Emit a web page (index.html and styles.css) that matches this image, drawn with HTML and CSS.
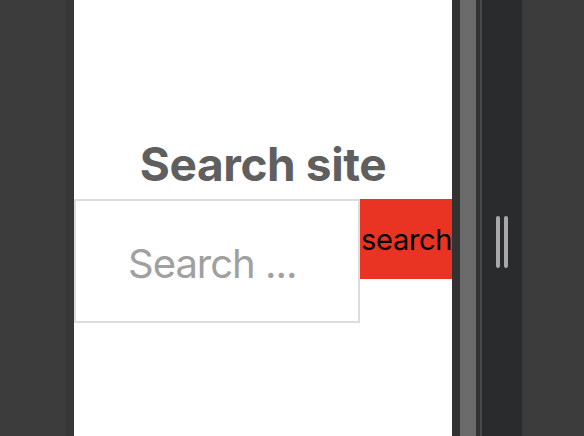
FILE: index.html
```html
<!DOCTYPE html>
<html>
<head>
<meta charset="utf-8">
<link rel="stylesheet" href="styles.css">
</head>
<body>
<div class="frame">
  <div class="gutter-left"></div>
  <div class="edge edge-left"></div>
  <main class="panel">
    <h1 class="title">Search site</h1>
    <form class="search">
      <input class="search-input" type="text" placeholder="Search ...">
      <button class="search-btn" type="button">search</button>
    </form>
  </main>
  <div class="edge"></div>
  <div class="scrollbar"></div>
  <div class="edge-thin"></div>
  <div class="line"></div>
  <div class="splitter">
    <span class="grip"></span>
    <span class="grip"></span>
  </div>
  <div class="gutter-right"></div>
</div>
</body>
</html>
```

FILE: styles.css
```css
html, body {
  margin: 0;
  padding: 0;
  height: 100%;
  overflow: hidden;
  background: #3c3c3c;
}

.frame {
  display: flex;
  height: 436px;
  width: 584px;
}

.gutter-left {
  width: 66px;
  background: #3c3c3c;
}

.edge {
  width: 8px;
  background: #323232;
}

.edge-left {
  background: #373737;
}

.panel {
  width: 378px;
  background: #ffffff;
  overflow: hidden;
  padding-top: 136px;
  box-sizing: border-box;
}

.title {
  margin: 0 0 7px;
  font-family: Inter, "Noto Sans", sans-serif;
  font-weight: 700;
  font-size: 46px;
  line-height: 56px;
  letter-spacing: -0.4px;
  color: #5f5f5f;
  text-align: center;
}

.search {
  display: flex;
  align-items: flex-start;
  margin: 0;
}

.search-input {
  box-sizing: border-box;
  width: 286px;
  height: 124px;
  margin: 0;
  border: 2px solid #dcdcdc;
  padding: 4px 0 0 52px;
  font-family: Inter, "Noto Sans", sans-serif;
  font-size: 40px;
  letter-spacing: -1px;
  color: #333;
  background: #fff;
  outline: none;
}

.search-input::placeholder {
  color: #a0a0a0;
}

.search-btn {
  flex: none;
  width: 92px;
  height: 80px;
  margin: 0;
  border: none;
  padding: 0 0 0 1px;
  background: #e93323;
  color: #000;
  font-family: Inter, "Noto Sans", sans-serif;
  font-size: 29px;
  letter-spacing: -0.3px;
  text-align: left;
  white-space: nowrap;
}

.scrollbar {
  width: 16px;
  background: #6b6b6b;
}

.edge-thin {
  width: 4px;
  background: #323232;
}

.line {
  width: 2px;
  background: #4a4a4a;
}

.splitter {
  width: 40px;
  background: #2a2b2d;
  display: flex;
  justify-content: center;
  align-items: center;
  gap: 4px;
  padding-top: 48px;
  box-sizing: border-box;
}

.grip {
  width: 4px;
  height: 52px;
  border-radius: 2px;
  background: #a8a8a8;
}

.gutter-right {
  flex: 1;
  background: #3c3c3c;
}
```
